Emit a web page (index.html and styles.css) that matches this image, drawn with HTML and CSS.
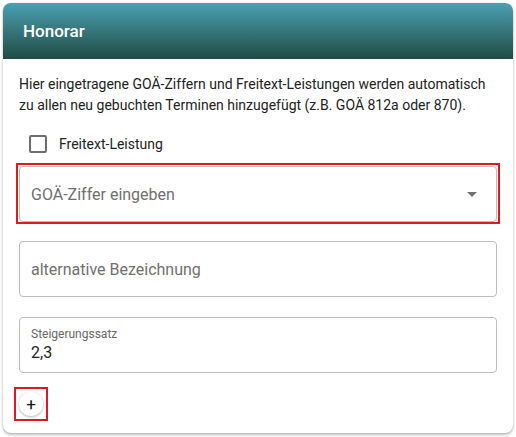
FILE: index.html
```html
<html>
<head>
  <title>Honorar</title>
  <link rel="stylesheet" href="styles.css">
</head>
<body>
  <div class="card">
    <div class="card-header">Honorar</div>
    <div class="card-body">
      <p class="hint">Hier eingetragene GOÄ-Ziffern und Freitext-Leistungen werden automatisch zu allen neu gebuchten Terminen hinzugefügt (z.B. GOÄ 812a oder 870).</p>

      <label class="check-row">
        <span class="check-box"></span>
        <span>Freitext-Leistung</span>
      </label>

      <div class="marked select-wrap">
        <div class="field">
          <span class="placeholder">GOÄ-Ziffer eingeben</span>
          <span class="arrow"></span>
        </div>
      </div>

      <div class="field field-gap">
        <span class="placeholder">alternative Bezeichnung</span>
      </div>

      <div class="field field-filled field-gap">
        <span class="small-label">Steigerungssatz</span>
        <span class="value">2,3</span>
      </div>

      <div class="marked add-wrap">
        <button class="add-btn">+</button>
      </div>
    </div>
  </div>
</body>
</html>
```

FILE: styles.css
```css
body {
  margin: 0;
  padding: 3px;
  background-color: #fff;
  font-family: Roboto, "Liberation Sans", sans-serif;
  color: #222;
}

.card {
  width: 510px;
  border-radius: 8px;
  background-color: #fff;
  box-shadow: 0 2px 3px rgba(0, 0, 0, 0.25), 0 0 2px rgba(0, 0, 0, 0.12);
  overflow: hidden;
}

.card-header {
  height: 56px;
  display: flex;
  align-items: center;
  padding-left: 20px;
  color: #fff;
  font-size: 17px;
  font-weight: 500;
  background: linear-gradient(to bottom, #4aa0b2, #214b43);
}

.card-body {
  padding: 15px 16px 12px 16px;
}

.hint {
  margin: 0;
  font-size: 14px;
  line-height: 21px;
  color: #222;
}

.check-row {
  display: flex;
  align-items: center;
  height: 39px;
  margin-top: 8px;
  padding-left: 10px;
  font-size: 14px;
  color: #222;
}

.check-box {
  width: 18px;
  height: 18px;
  box-sizing: border-box;
  border: 2px solid #6e6e6e;
  border-radius: 2px;
  margin-right: 12px;
}

.marked {
  border: 2px solid #e0191f;
}

.select-wrap {
  margin: 0 -3px;
  padding: 1px 1px 0 1px;
}

.field {
  height: 56px;
  box-sizing: border-box;
  border: 1px solid #bdbdbd;
  border-radius: 4px;
  padding: 0 11px;
  display: flex;
  align-items: center;
}

.field-gap {
  margin-top: 17px;
}

.field-filled {
  margin-top: 20px;
  flex-direction: column;
  align-items: flex-start;
  justify-content: center;
}

.placeholder {
  font-size: 16px;
  color: #707070;
}

.arrow {
  margin-left: auto;
  margin-right: 8px;
  width: 0;
  height: 0;
  border-left: 5px solid transparent;
  border-right: 5px solid transparent;
  border-top: 5px solid #707070;
}

.small-label {
  font-size: 12px;
  color: #666;
  line-height: 16px;
}

.value {
  font-size: 16px;
  line-height: 22px;
  color: #222;
}

.add-wrap {
  width: 34px;
  height: 34px;
  box-sizing: border-box;
  padding: 3px;
  margin-left: -5px;
  margin-top: 14px;
}

.add-btn {
  display: block;
  width: 24px;
  height: 24px;
  border: none;
  border-radius: 50%;
  padding: 0 0 1px 0;
  background-color: #fff;
  color: #111;
  font-family: Roboto, "Liberation Sans", sans-serif;
  font-size: 17px;
  font-weight: 400;
  line-height: 22px;
  box-shadow: 0 1px 3px rgba(0, 0, 0, 0.3);
  cursor: pointer;
}
```
